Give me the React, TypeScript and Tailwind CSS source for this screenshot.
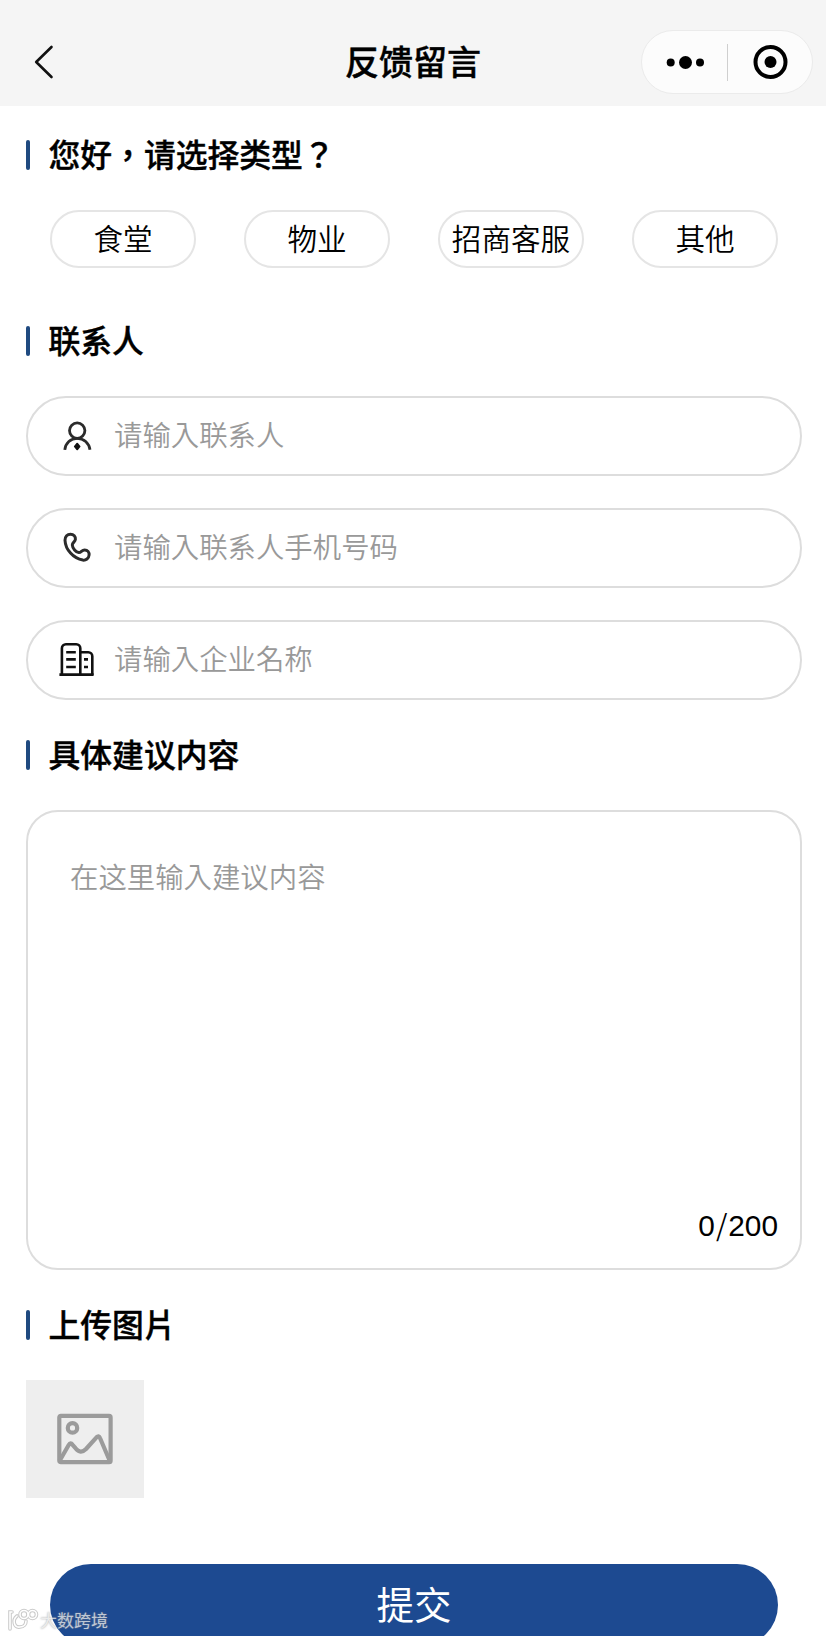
import React from "react";

type Field = {
  placeholder: string;
  icon: React.ReactNode;
};

const PersonIcon = () => (
  <svg width="36" height="36" viewBox="0 0 36 36" fill="none" stroke="#2b2b2b" strokeWidth="2.8">
    <circle cx="18.2" cy="12.6" r="7.7" />
    <path d="M5.8 31.8C6.6 25 11.6 20.4 18.2 20.4S30 25 31 31.8" />
    <path d="M18.2 25.6l2.4 2.9-2.4 2.9-2.4-2.9z" fill="#111" stroke="#111" strokeLinejoin="round" strokeWidth="1.8" />
  </svg>
);

const PhoneIcon = () => (
  <svg width="36" height="36" viewBox="0 0 36 36" fill="none" stroke="#2b2b2b" strokeWidth="3" strokeLinejoin="round">
    <path d="M6 10.2C6 6.4 8.4 4.2 11.4 4.2C14.8 4.2 16.7 6.5 16.4 9.4C16.1 11.8 13.3 12.6 13.3 15C13.5 18.2 17 22.4 19.8 22.6C22.3 22.7 22.6 19.9 25.6 19.9C28.6 19.9 30.3 22.2 30.1 25C29.8 28.4 26.9 30.5 23.8 30.1C14.4 28.6 6.4 19.6 6 10.2Z" />
  </svg>
);

const BuildingIcon = () => (
  <svg width="36" height="36" viewBox="0 0 36 36" fill="none" stroke="#111" strokeWidth="2.6">
    <path d="M2.9 33V6.2a4 4 0 0 1 4-4h10.4a4 4 0 0 1 4 4V33" />
    <path d="M21.3 10.2h8a4 4 0 0 1 4 4V33" />
    <path d="M.4 32.6h34.200" strokeWidth="2.8" />
    <path d="M7.2 10.2h9.6M7.2 17.4h9.6M7.2 25h9.6M25 17.4h4M25 25h4" />
  </svg>
);

const types = ["食堂", "物业", "招商客服", "其他"];

const fields: Field[] = [
  { placeholder: "请输入联系人", icon: <PersonIcon /> },
  { placeholder: "请输入联系人手机号码", icon: <PhoneIcon /> },
  { placeholder: "请输入企业名称", icon: <BuildingIcon /> },
];

const SectionTitle = ({ children }: { children: React.ReactNode }) => (
  <h2 className="flex h-[30px] items-center text-[31.8px] font-medium leading-[30px] text-black [-webkit-text-stroke:0.4px_#000]">
    <span className="mr-[18.5px] h-[30px] w-1 rounded-sm bg-[#1f4a80]" />
    <span className="pb-[5px]">{children}</span>
  </h2>
);

const App: React.FC = () => {
  return (
    <div className="relative h-[1636px] w-[826px] overflow-hidden bg-white font-['Noto_Sans_CJK_TC','Noto_Sans_CJK_SC',sans-serif] text-black">
      {/* Navigation bar */}
      <header className="grid h-[106px] grid-cols-[1fr_auto_1fr] items-center bg-[#f5f5f5] pt-[18px] pr-[13px] pl-[33px]">
        <svg width="22" height="34" viewBox="0 0 22 34" fill="none" stroke="#111" strokeWidth="2.6" strokeLinecap="round" strokeLinejoin="round">
          <path d="M18.5 2L3.2 17l15.3 15" />
        </svg>
        <h1 className="-ml-5 pb-[2px] text-[34px] font-medium leading-[40px] [-webkit-text-stroke:0.4px_#000]">反馈留言</h1>
        <div className="flex h-16 w-[172px] items-center justify-self-end rounded-full border border-[#ebebeb] bg-[#fcfcfc]">
          <svg width="85" height="40" viewBox="0 0 85 40">
            <circle cx="28.7" cy="20.5" r="4" />
            <circle cx="43.5" cy="20.5" r="6.5" />
            <circle cx="58" cy="20.5" r="4" />
          </svg>
          <span className="h-[37px] w-px bg-[#cfcfcf]" />
          <svg width="84" height="40" viewBox="0 0 84 40">
            <circle cx="42.5" cy="20" r="15" fill="none" stroke="#000" strokeWidth="4" />
            <circle cx="42.5" cy="20" r="6" />
          </svg>
        </div>
      </header>

      <main className="pt-[34px] pr-6 pl-[26px]">
        <SectionTitle>您好，请选择类型？</SectionTitle>
        <div className="mt-10 mb-[58px] flex gap-12 pl-6">
          {types.map((type) => (
            <button
              key={type}
              className="h-[58px] w-[146px] shrink-0 rounded-full border-2 border-[#e5e5e5] pb-[2px] text-[29.6px] font-[350] leading-[52px] whitespace-nowrap"
            >
              {type}
            </button>
          ))}
        </div>

        <SectionTitle>联系人</SectionTitle>
        <div className="mt-10 mb-10 flex flex-col gap-8">
          {fields.map((field) => (
            <label
              key={field.placeholder}
              className="flex h-20 items-center rounded-full border-2 border-[#dddddd] pl-[31px]"
            >
              {field.icon}
              <span className="ml-[19px] pb-1 text-[28.4px] leading-[40px] font-[350] text-[#999]">
                {field.placeholder}
              </span>
            </label>
          ))}
        </div>

        <SectionTitle>具体建议内容</SectionTitle>
        <div className="mt-10 mb-10 flex h-[460px] flex-col justify-between rounded-[32px] border-2 border-[#dddddd] pt-[44px] pr-[22px] pb-[22px] pl-[42px]">
          <span className="text-[28.4px] leading-[40px] font-[350] text-[#999]">在这里输入建议内容</span>
          <span className="self-end font-['Liberation_Sans',sans-serif] text-[29.8px] leading-[40px]">
            0<span className="mx-px font-['Noto_Sans_CJK_TC',sans-serif] text-[29px] leading-none font-[350]">/</span>200
          </span>
        </div>

        <SectionTitle>上传图片</SectionTitle>
        <div className="mt-10 flex size-[118px] items-center justify-center bg-[#eeeeee]">
          <svg width="58" height="52" viewBox="0 0 58 52" fill="none" stroke="#9b9b9b" strokeWidth="4.2" strokeLinejoin="round">
            <rect x="3.3" y="2.9" width="51.3" height="46.3" rx="1.5" />
            <circle cx="16.5" cy="14.9" r="4.7" />
            <path d="M3.5 48L12.7 32Q14.5 29 16.6 31.8L19.5 35.2Q24.5 41.5 30 36L40.5 24.3Q42.8 22 44 25L53.8 48" />
          </svg>
        </div>

        <button className="mt-[66px] ml-6 block h-[82px] w-[728px] rounded-full bg-[#1d4a91] pb-1 text-[37.5px] leading-[78px] text-white">
          提交
        </button>
      </main>

      {/* Watermark */}
      <div className="absolute top-[1608px] left-[7px] flex items-center opacity-80">
        <svg width="32" height="24" viewBox="0 0 32 24" fill="none" stroke="#bdbdbd" strokeWidth="3.6" strokeLinecap="round">
          <path d="M5 4H3v17M10 8c-5 4-3 12 3 11 4 0 6-3 6-6" />
          <circle cx="17" cy="6.5" r="4" />
          <circle cx="25.5" cy="6.5" r="4" />
          <g stroke="#fff" strokeWidth="1.6">
            <path d="M5 4H3v17M10 8c-5 4-3 12 3 11 4 0 6-3 6-6" />
            <circle cx="17" cy="6.5" r="4" />
            <circle cx="25.5" cy="6.5" r="4" />
          </g>
        </svg>
        <span className="ml-px text-[17px] leading-6 text-[#e8e8e8] [text-shadow:0_0_2px_#888]">大数跨境</span>
      </div>
    </div>
  );
};

export default App;
